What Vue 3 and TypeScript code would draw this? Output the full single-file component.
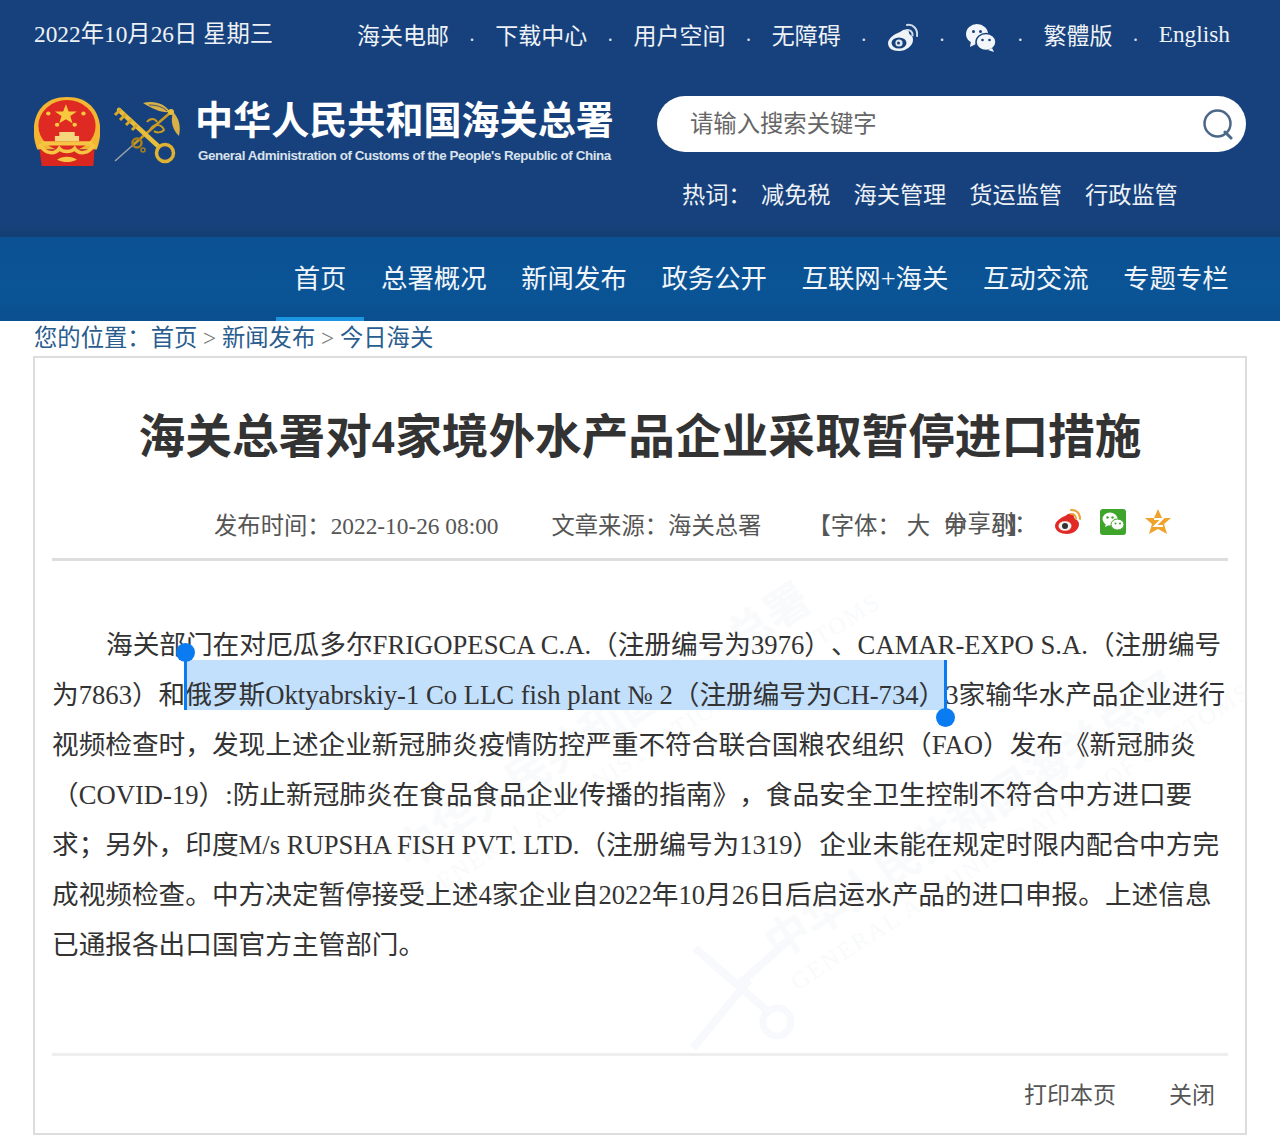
<script setup lang="ts">
const links = ['海关电邮', '下载中心', '用户空间', '无障碍']
const hotWords = ['减免税', '海关管理', '货运监管', '行政监管']
const navItems = ['首页', '总署概况', '新闻发布', '政务公开', '互联网+海关', '互动交流', '专题专栏']
const lines = [
  '视频检查时，发现上述企业新冠肺炎疫情防控严重不符合联合国粮农组织（FAO）发布《新冠肺炎',
  '（COVID-19）:防止新冠肺炎在食品食品企业传播的指南》，食品安全卫生控制不符合中方进口要',
  '求；另外，印度M/s RUPSHA FISH PVT. LTD.（注册编号为1319）企业未能在规定时限内配合中方完',
  '成视频检查。中方决定暂停接受上述4家企业自2022年10月26日后启运水产品的进口申报。上述信息',
  '已通报各出口国官方主管部门。',
]
</script>

<template>
  <div class="page">
    <header class="header">
      <div class="topbar">
        <span class="date">2022年10月26日 星期三</span>
        <nav class="toplinks">
          <template v-for="link in links" :key="link">
            <a>{{ link }}</a>
            <i class="dot">.</i>
          </template>
          <svg class="topicon" viewBox="0 0 32 32" width="32" height="32">
            <path d="M13 10c5-4 9-3 9 1 0 2 4 2 4 7 0 6-7 11-14 11S1 26 1 21c0-4 6-9 12-11z" fill="#eef3f8" />
            <ellipse cx="12" cy="21" rx="7.5" ry="5.5" fill="#17417c" />
            <circle cx="12" cy="21" r="3.6" fill="#dfe8f1" />
            <circle cx="11.5" cy="21" r="1.5" fill="#17417c" />
            <path d="M20 3c6-1 11 4 10 11M20 8c3-.6 6 2 5.500 5.500" fill="none" stroke="#cfdbe8" stroke-width="2" stroke-linecap="round" />
          </svg>
          <i class="dot">.</i>
          <svg class="topicon" viewBox="0 0 32 32" width="32" height="32">
            <ellipse cx="12" cy="12" rx="11" ry="10" fill="#f2f5f9" />
            <path d="M6 19l-1 6 6-3z" fill="#f2f5f9" />
            <ellipse cx="21" cy="20" rx="10" ry="8.500" fill="#f2f5f9" stroke="#17417c" stroke-width="1.500" />
            <path d="M27 26l2 4-6-2z" fill="#f2f5f9" />
            <circle cx="8.500" cy="9.500" r="1.500" fill="#17417c" />
            <circle cx="15.500" cy="9.500" r="1.500" fill="#17417c" />
            <circle cx="17.500" cy="18" r="1.300" fill="#17417c" />
            <circle cx="24.500" cy="18" r="1.300" fill="#17417c" />
          </svg>
          <i class="dot">.</i>
          <a>繁體版</a>
          <i class="dot">.</i>
          <a class="english">English</a>
        </nav>
      </div>

      <div class="brandrow">
        <div class="brand">
          <svg class="emblem" viewBox="3 1 60 68" width="66" height="70" preserveAspectRatio="none">
            <path d="M6 52C-2 30 4 1 33 1s35 29 27 51z" fill="#f2b632" />
            <ellipse cx="33" cy="29" rx="26" ry="25" fill="#df2a24" />
            <polygon points="32,8 34.500,15 42,15 36,19.500 38,26.500 32,22.500 26,26.500 28,19.500 22,15 29.500,15" fill="#f8c93f" />
            <circle cx="16" cy="17" r="2" fill="#f8c93f" />
            <circle cx="48" cy="17" r="2" fill="#f8c93f" />
            <circle cx="24" cy="28" r="2" fill="#f8c93f" />
            <circle cx="40" cy="28" r="2" fill="#f8c93f" />
            <path d="M26 35h14v4h4v5H22v-5h4z" fill="#f4d67c" />
            <path d="M10 44h46v4H10z" fill="#f6c544" />
            <path d="M8 52h50l-1 16H10z" fill="#d9261f" />
            <path d="M8 47c6 10 14 10 18 4 3 4 11 4 14 0 4 6 12 6 18-4" fill="none" stroke="#f6c544" stroke-width="3.500" />
            <path d="M24 62c4-4 14-4 18 0-6 3-12 3-18 0z" fill="#f6c544" />
          </svg>
          <svg class="customs" viewBox="0 0 68 68" width="68" height="68">
            <path d="M2 61L20 45" stroke="#9aa3ad" stroke-width="1.500" />
            <path d="M20 45L58 12" stroke="#c99a22" stroke-width="2.500" />
            <path d="M6 10L45 46" stroke="#e6bd3c" stroke-width="4.500" stroke-linecap="round" />
            <path d="M2 15l6-6M7 20l6-6M13 25l6-6M19 30l5-5" stroke="#d8a928" stroke-width="3" />
            <circle cx="52" cy="53" r="8.500" fill="none" stroke="#e0b232" stroke-width="3.500" />
            <circle cx="24" cy="43" r="4.500" fill="none" stroke="#a87f1e" stroke-width="2.500" />
            <circle cx="30" cy="50" r="2" fill="none" stroke="#a87f1e" stroke-width="1.500" />
            <path d="M37 30c4-7 12-6 14 0-3 3-8 3-10 1M34 22c3-4 8-4 10 0" fill="none" stroke="#c99a22" stroke-width="2" />
            <path d="M30 3c10-3 22 0 27 9-9 1-17-3-27-9z" fill="#d8b048" />
            <path d="M36 5c8 0 14 2 18 6" fill="none" stroke="#173f78" stroke-width=".8" />
            <path d="M60 12c6 6 8 14 6 24-6-6-9-14-6-24z" fill="#d8b048" />
            <circle cx="58" cy="12" r="3" fill="#e6bd3c" />
          </svg>
          <div class="brandtext">
            <div class="cnname">中华人民共和国海关总署</div>
            <div class="enname">General Administration of Customs of the People's Republic of China</div>
          </div>
        </div>

        <div class="searcharea">
          <div class="search">
            <span class="placeholder">请输入搜索关键字</span>
            <svg viewBox="0 0 32 32" width="32" height="32">
              <circle cx="15.500" cy="15.500" r="13" fill="none" stroke="#4c6788" stroke-width="2.500" />
              <path d="M23 24l6 6" stroke="#4c6788" stroke-width="3" stroke-linecap="round" />
            </svg>
          </div>
          <div class="hot">
            <span>热词：</span>
            <a v-for="word in hotWords" :key="word">{{ word }}</a>
          </div>
        </div>
      </div>
    </header>

    <nav class="mainnav">
      <a v-for="(item, i) in navItems" :key="item" :class="{ active: i === 0 }">{{ item }}</a>
    </nav>

    <div class="crumbs">
      您的位置：<a>首页</a><i>&gt;</i><a>新闻发布</a><i>&gt;</i><a>今日海关</a>
    </div>

    <main class="card">
      <div class="watermark wm-upper" aria-hidden="true">
        <div class="wm-cn">中华人民共和国海关总署</div>
        <div class="wm-en">GENERAL ADMINISTRATION OF CUSTOMS</div>
      </div>
      <div class="watermark wm-lower" aria-hidden="true">
        <div class="wm-cn">中华人民共和国海关总署</div>
        <div class="wm-en">GENERAL ADMINISTRATION OF CUSTOMS</div>
      </div>
      <svg class="wm-mark" viewBox="0 0 110 120" width="110" height="120" aria-hidden="true">
        <path d="M4 118L60 50M6 18l76 66M48 56L100 10" stroke="#f8f9fc" stroke-width="8" fill="none" />
        <circle cx="88" cy="92" r="14" fill="none" stroke="#f8f9fc" stroke-width="7" />
      </svg>

      <h1 class="title">海关总署对4家境外水产品企业采取暂停进口措施</h1>

      <div class="meta">
        <span class="published">发布时间：2022-10-26 08:00</span>
        <span class="source">文章来源：海关总署</span>
        <span class="fontsize">【字体：<b class="large">大</b><span class="sizes"><b>中</b><b class="small">小</b>】<span class="share">分享到：</span></span></span>
        <svg class="shareicon first-icon" viewBox="0 0 28 28" width="28" height="28">
          <path d="M11 8c5-4 9-3 9 1 0 2 5 3 5 7 0 6-6 10-12 10S1 23 1 18c0-4 5-8 10-10z" fill="#e12a26" />
          <ellipse cx="11" cy="18" rx="6.500" ry="4.800" fill="#f3f3f3" />
          <circle cx="11" cy="18" r="3" fill="#333" />
          <path d="M17 2c5-.5 9 3 9 9M17 6c3-.3 5 1.700 5 5" fill="none" stroke="#eda13a" stroke-width="2" stroke-linecap="round" />
        </svg>
        <svg class="shareicon" viewBox="0 0 28 28" width="28" height="28">
          <rect x="1" y="1" width="26" height="26" rx="3" fill="#3fa52a" />
          <ellipse cx="11" cy="11" rx="7.500" ry="6.500" fill="#fff" />
          <path d="M7 15l-1 4 4-2z" fill="#fff" />
          <ellipse cx="18.500" cy="16.500" rx="6.500" ry="5.500" fill="#fff" stroke="#3fa52a" />
          <circle cx="8.500" cy="9.500" r="1.200" fill="#3fa52a" />
          <circle cx="13.500" cy="9.500" r="1.200" fill="#3fa52a" />
          <circle cx="16.500" cy="15.500" r="1" fill="#3fa52a" />
          <circle cx="21" cy="15.500" r="1" fill="#3fa52a" />
        </svg>
        <svg class="shareicon" viewBox="0 0 28 28" width="28" height="28">
          <polygon points="14,1 18,10 27,10 20,16 23,26 14,21 5,26 8,16 1,10 10,10" fill="#efa32b" />
          <path d="M10 11h8l-7 7h8" fill="none" stroke="#fff" stroke-width="2.200" />
        </svg>
      </div>

      <article class="content">
        <div class="line indent">海关部门在对厄瓜多尔FRIGOPESCA C.A.（注册编号为3976）、CAMAR-EXPO S.A.（注册编号</div>
        <div class="line">为7863）和<span class="selected"><i class="handle start"></i>俄罗斯Oktyabrskiy-1 Co LLC fish plant № 2（注册编号为CH-734）<i class="handle end"></i></span>3家输华水产品企业进行</div>
        <div v-for="text in lines" :key="text" class="line">{{ text }}</div>
      </article>

      <footer class="actions">
        <a>打印本页</a>
        <a>关闭</a>
      </footer>
    </main>
  </div>
</template>

<style scoped>
.page {
  width: 1280px;
  height: 1145px;
  overflow: hidden;
  background: #fff;
  font-family: "Liberation Serif", "Noto Sans CJK SC", serif;
  font-size: 23.33px;
  color: #555;
  text-spacing-trim: space-all;
}

.header {
  height: 237px;
  box-sizing: border-box;
  background: linear-gradient(#17417c 0, #17417c 222px, #143f74 237px);
  color: #eef2f7;
  padding: 18px 34px 0;
}

.topbar {
  display: flex;
  justify-content: space-between;
  align-items: center;
  height: 34px;
  padding-right: 16px;
}

.date {
  position: relative;
  top: -3px;
}

.toplinks {
  display: flex;
  align-items: center;
  padding-bottom: 2px;
  font-size: 23px;
}

.english {
  font-size: 23.33px;
}

.dot {
  width: 46.250px;
  text-align: center;
  font-style: normal;
  font-size: 20px;
  color: #dce5ef;
}

.topicon {
  display: block;
  margin-top: 8px;
}

.brandrow {
  display: flex;
  justify-content: space-between;
  margin-top: 44px;
}

.brand {
  display: flex;
  align-items: flex-start;
}

.emblem {
  display: block;
  margin-top: 1px;
}

.customs {
  display: block;
  margin: 4px 0 0 13px;
}

.brandtext {
  margin: -2px 0 0 14px;
}

.cnname {
  font-family: "Noto Sans CJK SC", sans-serif;
  font-weight: 700;
  font-size: 38.100px;
  line-height: 48px;
  color: #fff;
  white-space: nowrap;
}

.enname {
  margin: 5px 0 0 3px;
  font-family: "Liberation Sans", sans-serif;
  font-size: 13.400px;
  font-weight: 700;
  line-height: 18px;
  letter-spacing: -0.420px;
  color: #d9e1ec;
  white-space: nowrap;
}

.searcharea {
  width: 589px;
}

.search {
  display: flex;
  align-items: center;
  justify-content: space-between;
  height: 56px;
  box-sizing: border-box;
  padding: 0 12px 0 33px;
  border-radius: 28px;
  background: #fff;
  color: #666;
}

.placeholder {
  position: relative;
  top: -2px;
}

.hot {
  display: flex;
  gap: 23px;
  margin: 28px 0 0 25px;
  font-size: 23.200px;
  line-height: 30px;
  white-space: nowrap;
}

.hot span {
  width: 56px;
}

.mainnav {
  display: flex;
  justify-content: flex-end;
  height: 84px;
  box-sizing: border-box;
  padding-right: 34px;
  background: linear-gradient(#0b5193 0, #0a5496 70%, #0a4f8e 100%);
  color: #f2f6fa;
  font-size: 26.400px;
  line-height: 84px;
}

.mainnav a {
  padding: 0 17.300px;
}

.mainnav a.active {
  border-bottom: 4px solid #1b95e0;
  height: 84px;
  box-sizing: border-box;
}

.crumbs {
  height: 35px;
  margin-left: 34px;
  line-height: 34px;
  color: #2a5d8f;
}

.crumbs i {
  margin: 0 5.750px;
  font-style: normal;
  color: #777;
}

.card {
  position: relative;
  width: 1214px;
  height: 779px;
  box-sizing: border-box;
  margin-left: 33px;
  padding: 0 17px;
  border: 2px solid #ddd;
  overflow: hidden;
}

.watermark {
  position: absolute;
  transform: rotate(-33deg);
  transform-origin: left top;
  color: #f9fafc;
  white-space: nowrap;
  z-index: 0;
}

.wm-upper {
  left: 345px;
  top: 470px;
}

.wm-lower {
  left: 715px;
  top: 560px;
}

.wm-cn {
  font-family: "Noto Sans CJK SC", sans-serif;
  font-weight: 700;
  font-size: 44px;
}

.wm-en {
  font-size: 24px;
  letter-spacing: 2px;
  margin-top: 2px;
}

.wm-mark {
  position: absolute;
  left: 654px;
  top: 572px;
}

.title {
  position: relative;
  margin: 0;
  padding-top: 49px;
  height: 120px;
  box-sizing: border-box;
  text-align: center;
  font-size: 46.650px;
  font-weight: 700;
  line-height: 60px;
  color: #333;
  white-space: nowrap;
}

.meta {
  position: relative;
  display: flex;
  align-items: center;
  height: 83px;
  box-sizing: border-box;
  padding: 11px 0 0 162px;
  border-bottom: 3px solid #ddd;
  white-space: nowrap;
}

.source {
  margin-left: 53px;
}

.fontsize {
  margin-left: 46px;
}

.fontsize b {
  font-weight: 400;
}

.large {
  margin-left: 6px;
}

.sizes {
  position: relative;
  margin-left: 14px;
}

.sizes .small {
  margin-left: 23.500px;
  margin-right: -7px;
}

.share {
  position: absolute;
  left: 0;
  top: -8px;
}

.shareicon {
  display: block;
  margin: -4px 0 0 17px;
}

.first-icon {
  margin-left: 23px;
}

.content {
  position: relative;
  padding-top: 59px;
  font-size: 26.670px;
  line-height: 50px;
  color: #333;
}

.line {
  white-space: nowrap;
}

.indent {
  padding-left: 54px;
}

.selected {
  position: relative;
  display: inline-block;
  z-index: 0;
}

.selected::before {
  content: "";
  position: absolute;
  left: 0;
  right: 0;
  top: -10px;
  height: 50px;
  background: #c2dffc;
  z-index: -1;
}

.handle {
  position: absolute;
  width: 3px;
  height: 58px;
  background: #0a7bf0;
}

.handle::before {
  content: "";
  position: absolute;
  left: -8px;
  width: 19px;
  height: 19px;
  border-radius: 50%;
  background: #0a7bf0;
}

.handle.start {
  left: -1px;
  top: -18px;
}

.handle.start::before {
  top: -9px;
}

.handle.end {
  right: -2px;
  top: -10px;
}

.handle.end::before {
  bottom: -9px;
}

.actions {
  position: absolute;
  left: 17px;
  right: 17px;
  top: 695px;
  display: flex;
  justify-content: flex-end;
  gap: 53px;
  height: 78px;
  box-sizing: border-box;
  padding: 23px 13px 0 0;
  border-top: 3px solid #eee;
  font-size: 23px;
  line-height: 34px;
}
</style>
